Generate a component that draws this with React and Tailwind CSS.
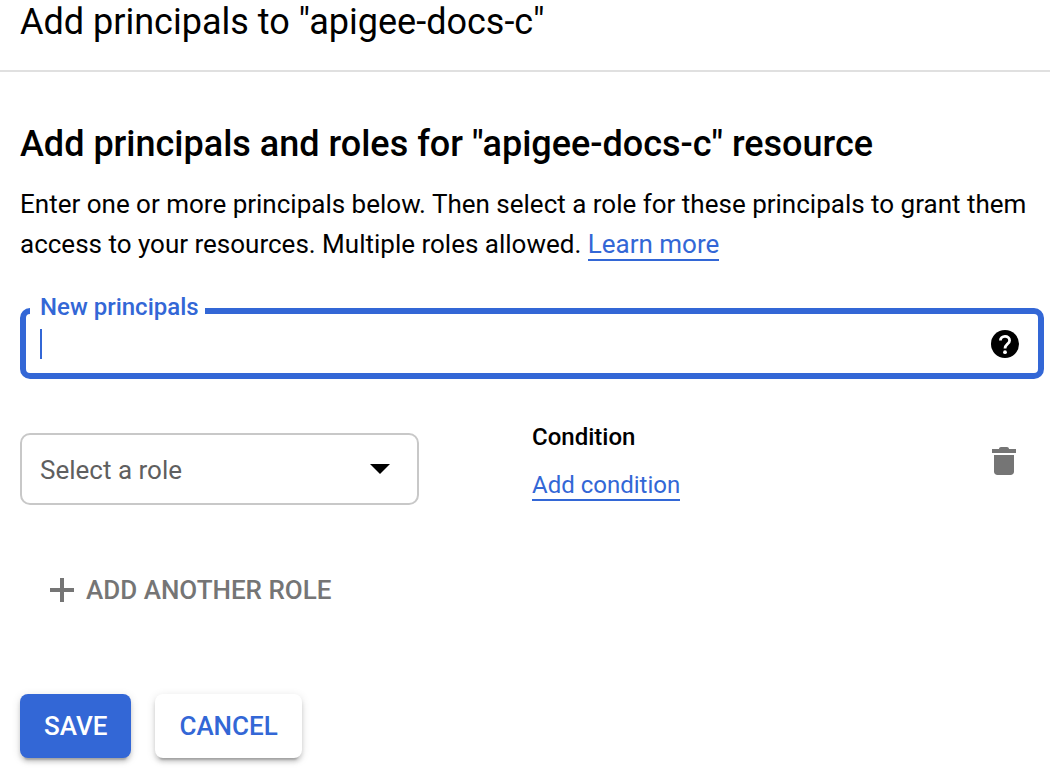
import React, { useState } from 'react';

const HelpIcon = () => (
    <svg className="w-7 h-7" viewBox="0 0 28 28" fill="none" aria-hidden="true">
        <circle cx="14" cy="14" r="14" fill="currentColor" />
        <path d="M9.4 10.6c0-2.4 2-4.3 4.6-4.3s4.6 1.7 4.6 4.1c0 3.5-4.6 3.9-4.6 8" stroke="#fff" strokeWidth="2.8" />
        <circle cx="14" cy="22.2" r="1.9" fill="#fff" />
    </svg>
);

const TrashIcon = () => (
    <svg className="w-6 h-7" viewBox="0 0 24 28" fill="currentColor" aria-hidden="true">
        <path d="M0 2h7c0-1.2.9-2 2-2h6c1.1 0 2 .8 2 2h7v4H0z" />
        <path d="M2 8h20v16.5c0 2-1.5 3.5-3.5 3.5h-13C3.5 28 2 26.5 2 24.5z" />
    </svg>
);

const PlusIcon = () => (
    <svg className="w-6 h-6" viewBox="0 0 24 24" fill="currentColor" aria-hidden="true">
        <path d="M10 0h4v10h10v4H14v10h-4V14H0v-4h10z" />
    </svg>
);

/**
 * PrincipalsField: Outlined text box with its label set into the border.
 */
const PrincipalsField = ({ value, onChange }) => (
    <fieldset className="mt-[31px] border-6 border-[#3367d6] rounded-[10px]">
        <legend className="ml-1 pl-[10px] pr-[6px] pb-2 text-[24px] leading-6 font-medium text-[#3367d6]">
            <label htmlFor="principals">New principals</label>
        </legend>
        <div className="flex items-center h-[34px] mb-3 pl-[14px] pr-[19px]">
            {value === '' && <span className="w-[2px] h-[30px] bg-[#3367d6]" />}
            <input
                id="principals"
                type="text"
                value={value}
                onChange={(e) => onChange(e.target.value)}
                className="flex-1 min-w-0 text-[26px] leading-8 outline-none caret-transparent"
            />
            <button type="button" aria-label="Help">
                <HelpIcon />
            </button>
        </div>
    </fieldset>
);

const RoleRow = ({ role, setRole }) => (
    <div className="mt-[46px] grid grid-cols-2">
        <div className="pt-2 pr-[113px]">
            <div className="relative">
                <select
                    aria-label="Select a role"
                    value={role}
                    onChange={(e) => setRole(e.target.value)}
                    className="block w-full h-[72px] pt-[2px] pl-[18px] pr-14 appearance-none border-2 border-[#c8c8c8] rounded-[10px] bg-white text-[26px] text-[#5f5f5f]"
                >
                    <option value="">Select a role</option>
                </select>
                <svg className="absolute right-[29px] top-[31px] w-5 h-[10px] pointer-events-none" viewBox="0 0 20 10" aria-hidden="true">
                    <path d="M0 0h20L10 10z" />
                </svg>
            </div>
        </div>
        <div className="flex items-start justify-between pr-7">
            <div className="text-[24px] leading-6">
                <h3 className="font-medium">Condition</h3>
                <p className="mt-6">
                    <a href="#condition" className="text-[#3367d6] border-b-2 border-[#3367d6]">Add condition</a>
                </p>
            </div>
            <button type="button" aria-label="Delete role" className="mt-[22px] text-[#757575]">
                <TrashIcon />
            </button>
        </div>
    </div>
);

const App = () => {
    const [principals, setPrincipals] = useState('');
    const [role, setRole] = useState('');

    return (
        <div className="bg-white text-black font-[Roboto,sans-serif]">
            <header className="pl-5 pb-[26px] border-b-2 border-[#e0e0e0]">
                <h1 className="text-[36px] leading-[44px]">Add principals to "apigee-docs-c"</h1>
            </header>
            <form className="pt-12 pl-5 pr-[6px] pb-4" onSubmit={(e) => e.preventDefault()}>
                <h2 className="text-[36px] leading-[48px] font-medium">Add principals and roles for "apigee-docs-c" resource</h2>
                <p className="mt-4 text-[26px] leading-10">
                    Enter one or more principals below. Then select a role for these principals to grant them access to your resources. Multiple roles allowed.{' '}
                    <a href="#learn-more" className="text-[#3367d6] border-b-2 border-[#3367d6]">Learn more</a>
                </p>

                <PrincipalsField value={principals} onChange={setPrincipals} />
                <RoleRow role={role} setRole={setRole} />

                <button type="button" className="mt-[53px] ml-[30px] flex items-center gap-3 h-16 text-[26px] font-medium text-[#757575]">
                    <PlusIcon />
                    ADD ANOTHER ROLE
                </button>

                <div className="mt-18 flex gap-6 text-[26px] font-medium">
                    <button type="submit" className="h-16 px-6 rounded-lg bg-[#3367d6] text-white shadow-[0_6px_2px_-4px_rgba(0,0,0,0.2),0_4px_4px_0_rgba(0,0,0,0.14),0_2px_10px_0_rgba(0,0,0,0.12)]">
                        SAVE
                    </button>
                    <button type="button" className="h-16 px-6 rounded-lg bg-white text-[#3367d6] shadow-[0_6px_2px_-4px_rgba(0,0,0,0.2),0_4px_4px_0_rgba(0,0,0,0.14),0_2px_10px_0_rgba(0,0,0,0.12)]">
                        CANCEL
                    </button>
                </div>
            </form>
        </div>
    );
};

export default App;
